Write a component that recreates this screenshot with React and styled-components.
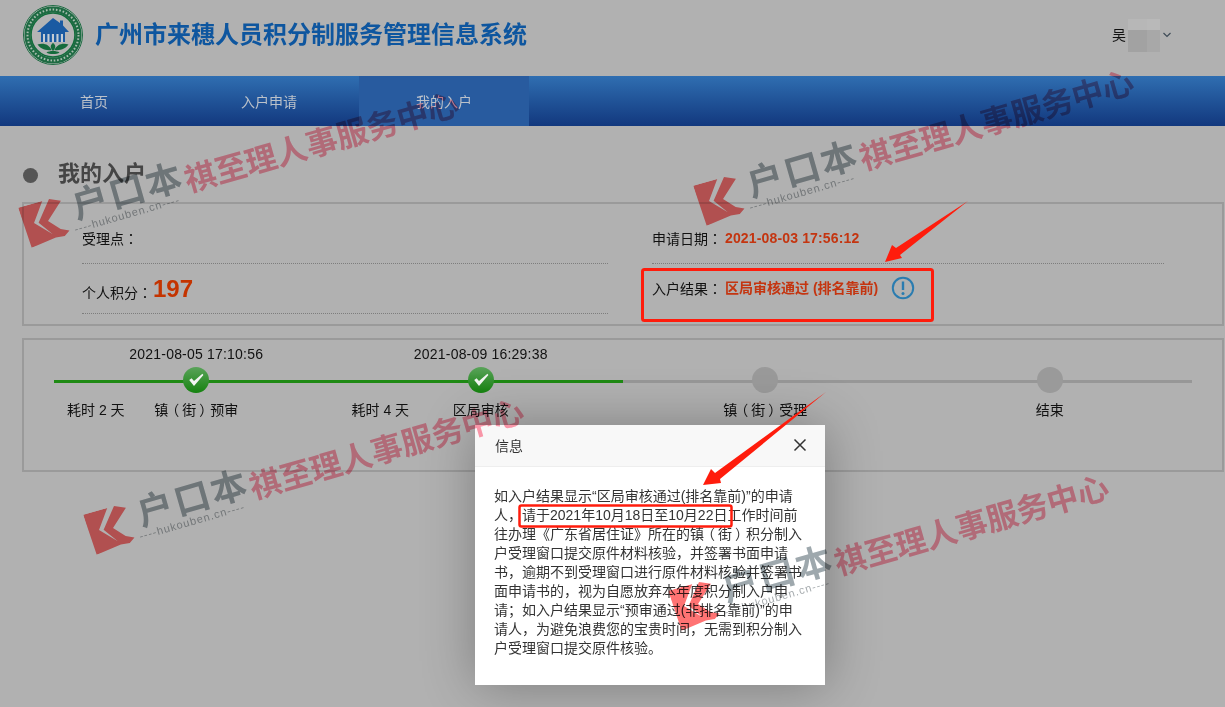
import React from "react";
import styled, { createGlobalStyle } from "styled-components";

const CJK = `"Liberation Sans", "Noto Sans CJK SC", sans-serif`;

const Global = createGlobalStyle`
  html, body { margin: 0; padding: 0; }
  body { font-family: ${CJK}; background: #b1b1b1; }
  * { box-sizing: border-box; }
`;

const Page = styled.div`
  position: relative;
  width: 1225px;
  height: 707px;
  overflow: hidden;
  background: #b1b1b1;
  color: #111;
  font-size: 14px;
`;

const Header = styled.header`
  height: 76px;
  display: flex;
  align-items: center;
  padding: 0 0 6px 23px;
  gap: 12px;
`;

const SiteTitle = styled.h1`
  margin: 0;
  font-size: 24px;
  line-height: 30px;
  font-weight: 700;
  color: #0e569f;
`;

const User = styled.div`
  margin-left: auto;
  margin-right: 54px;
  display: flex;
  align-items: center;
  font-size: 14px;
  line-height: 20px;
`;

const BlurGrid = styled.div`
  width: 32px;
  height: 33px;
  margin: 0 3px 0 2px;
  display: grid;
  grid-template-columns: 19px 13px;
  grid-template-rows: 11px 22px;
`;

const BlurCell = styled.span`
  background: ${(p) => p.$c};
`;

const Nav = styled.nav`
  height: 50px;
  display: flex;
  padding-left: 6.5px;
  background: linear-gradient(#2f6eb1, #12387e);
`;

const NavItem = styled.a`
  width: 175px;
  display: flex;
  align-items: center;
  justify-content: center;
  font-size: 14px;
  color: #bcc2ca;
  ${(p) =>
    p.$active &&
    `
    background: linear-gradient(90deg, transparent 1.5px, #285b9f 1.5px, #285b9f 172.5px, transparent 172.5px);
  `}
`;

const Content = styled.main`
  padding: 0 1px 0 22px;
`;

const SectionTitle = styled.div`
  height: 76px;
  display: flex;
  align-items: center;
  gap: 20px;
  padding: 14px 0 0 1px;
  font-size: 22px;
  font-weight: 700;
  color: #454545;
`;

const Dot = styled.span`
  width: 15px;
  height: 15px;
  margin-top: 8px;
  border-radius: 50%;
  background: #555;
`;

const Panel = styled.section`
  border: 2px solid #9a9a9a;
`;

const InfoPanel = styled(Panel)`
  height: 124px;
  display: grid;
  grid-template-columns: 526px 512px;
  column-gap: 44px;
  grid-template-rows: 60px 50px;
  padding: 0 0 0 58px;
`;

const InfoRow = styled.div`
  display: flex;
  align-items: flex-start;
  padding-top: ${(p) => p.$top}px;
  line-height: 20px;
  ${(p) => p.$rule && "border-bottom: 1px dotted #7d7d7d;"}
`;

const Colon = styled.span`
  font-family: "Noto Sans CJK TC", sans-serif;
`;

const StrongRed = styled.span`
  color: #c43510;
  font-weight: 700;
  font-size: 14px;
  letter-spacing: ${(p) => p.$ls || 0};
  margin-left: 3px;
`;

const Score = styled.span`
  color: #c43400;
  font-size: 24px;
  font-weight: 700;
  line-height: 20px;
  margin-top: -3px;
  margin-left: 1px;
`;

const InfoIcon = styled.svg`
  width: 24px;
  height: 24px;
  margin: -2px 0 0 13px;
`;

const TimelinePanel = styled(Panel)`
  margin-top: 12px;
  height: 134px;
  padding: 0 30px;
  display: grid;
  grid-template-columns: repeat(4, 284.5px);
  align-content: start;
`;

const Step = styled.div`
  position: relative;
  display: grid;
  grid-template-rows: 27px 26px 30px;
  justify-items: center;
  align-items: center;
  &::before {
    content: "";
    position: absolute;
    left: 0;
    right: 0;
    top: 40px;
    height: 2.5px;
    background: ${(p) => (p.$done ? "#1f8a14" : "#979797")};
  }
`;

const StepTime = styled.div`
  font-size: 14px;
  letter-spacing: 0.2px;
`;

const StepDot = styled.div`
  position: relative;
  z-index: 1;
  width: 26px;
  height: 26px;
  border-radius: 50%;
  background: ${(p) =>
    p.$done ? "linear-gradient(#5aa35a, #15820f)" : "#9a9a9a"};
  display: flex;
  align-items: center;
  justify-content: center;
`;

const StepFoot = styled.div`
  width: 100%;
  display: grid;
  grid-template-columns: 1fr 84px 1fr;
  align-items: center;
  font-size: 14px;
  padding-top: 2px;
`;

const Duration = styled.span`
  padding-left: 13px;
`;

const StepName = styled.span`
  text-align: center;
  white-space: nowrap;
`;

const Paren = styled.span`
  display: inline-block;
  transform: translateX(${(p) => (p.$close ? "3px" : "-3px")});
`;

const Modal = styled.div`
  position: absolute;
  left: 475px;
  top: 425px;
  width: 350px;
  height: 260px;
  background: #fff;
  box-shadow: 1px 1px 50px rgba(0, 0, 0, 0.3);
  z-index: 2;
`;

const ModalHead = styled.div`
  height: 42px;
  padding: 0 18px 2px 20px;
  display: flex;
  align-items: center;
  justify-content: space-between;
  background: #f8f8f8;
  border-bottom: 1px solid #eee;
  font-size: 14px;
  color: #333;
`;

const ModalBody = styled.p`
  margin: 0;
  padding: 20px 20px 0 19px;
  font-size: 14px;
  line-height: 19px;
  color: #333;
`;

const Mark = styled.div`
  position: absolute;
  left: ${(p) => p.$x}px;
  top: ${(p) => p.$y}px;
  height: 60px;
  z-index: 3;
  display: flex;
  align-items: center;
  transform: rotate(-16deg);
  transform-origin: 0 50%;
  mix-blend-mode: multiply;
  white-space: nowrap;
  pointer-events: none;
`;

const Brand = styled.div`
  display: flex;
  flex-direction: column;
  align-items: flex-start;
  margin-left: 9px;
  width: 115px;
`;

const BrandName = styled.span`
  font-size: 36px;
  line-height: 30px;
  font-weight: 700;
  letter-spacing: 2px;
  color: #9ea8ad;
`;

const BrandUrl = styled.span`
  font-size: 11px;
  line-height: 12px;
  color: #a7acaf;
  letter-spacing: 0.9px;
  margin-left: -5px;
`;

const Slogan = styled.span`
  font-size: 31.5px;
  line-height: 36px;
  font-weight: 700;
  color: #ff9aad;
`;

const Annotations = styled.svg`
  position: absolute;
  left: 0;
  top: 0;
  z-index: 4;
  pointer-events: none;
`;

const Emblem = () => (
  <svg width="60" height="60" viewBox="0 0 60 60">
    <circle cx="30" cy="30" r="29.5" fill="#b6bdb8" stroke="#1e6b43" strokeWidth="1" />
    <circle cx="30" cy="30" r="25.5" fill="none" stroke="#1e6b43" strokeWidth="6" />
    <circle cx="30" cy="30" r="25.5" fill="none" stroke="#a8bdae" strokeWidth="2" strokeDasharray="1.6 1.8" />
    <circle cx="30" cy="30" r="22" fill="#b4b4b4" stroke="#146c3c" strokeWidth="1.6" />
    <path d="M30 13 L37 18 V15.5 H40 V20.5 L46 27 H42 V37 H18 V27 H14 Z" fill="#1a5aa2" />
    <path d="M20 29 H40 V37 H20 Z" fill="#c4ccd4" />
    <path d="M22 27.5 h2.4 v9.5 h-2.4z M26.5 27.5 h2.4 v9.5 h-2.4z M31 27.5 h2.4 v9.5 h-2.4z M35.5 27.5 h2.4 v9.5 h-2.4z" fill="#1a5aa2" />
    <path d="M30 38 C27 40 27 43 30 46 C33 43 33 40 30 38Z M28.5 45 C22 46 17 43 14.5 39.5 C20 37.5 26 39 28.5 45Z M31.5 45 C38 46 43 43 45.5 39.5 C40 37.5 34 39 31.5 45Z" fill="#156b3c" />
    <path d="M23.5 47.5 C26 45.5 34 45.5 36.5 47.5 C34 49.5 26 49.5 23.5 47.5Z" fill="#156b3c" />
  </svg>
);

const Chevron = () => (
  <svg width="8" height="6" viewBox="0 0 8 6">
    <path d="M0.5 1 L4 4.5 L7.5 1" fill="none" stroke="#3f4c58" strokeWidth="1.2" />
  </svg>
);

const Check = () => (
  <svg width="18" height="16" viewBox="0 0 18 16">
    <path d="M2.2 8 L4.6 6.2 L7 9 L15.4 1.8 L16.4 3 L7 14 Z" fill="#f2f5f2" />
  </svg>
);

const KLogo = () => (
  <svg width="44" height="42" viewBox="0 0 44 42">
    <path
      fill="#ff7373"
      d="M0 0 H25 L11 19 L26 35 L15.5 20 L32 0 L43 5 L25 21 L35 32 L43 36 L37 40 L28 39 L2 42 Z"
    />
  </svg>
);

const Watermark = ({ x, y }) => (
  <Mark $x={x} $y={y}>
    <KLogo />
    <Brand>
      <BrandName>户口本</BrandName>
      <BrandUrl>----hukouben.cn----</BrandUrl>
    </Brand>
    <Slogan>祺至理人事服务中心</Slogan>
  </Mark>
);

const Jie = () => (
  <>
    <Paren>（</Paren>街<Paren $close>）</Paren>
  </>
);

const steps = [
  { key: "a", time: "2021-08-05 17:10:56", name: <>镇<Jie />预审</>, took: "耗时 2 天", done: true },
  { key: "b", time: "2021-08-09 16:29:38", name: "区局审核", took: "耗时 4 天", done: true },
  { key: "c", time: "", name: <>镇<Jie />受理</>, took: "", done: false },
  { key: "d", time: "", name: "结束", took: "", done: false },
];

export default function App() {
  return (
    <>
      <Global />
      <Page>
        <Header>
          <Emblem />
          <SiteTitle>广州市来穗人员积分制服务管理信息系统</SiteTitle>
          <User>
            吴
            <BlurGrid>
              <BlurCell $c="#b7b7b7" />
              <BlurCell $c="#b9b9b9" />
              <BlurCell $c="#a2a2a2" />
              <BlurCell $c="#a8a8a8" />
            </BlurGrid>
            <Chevron />
          </User>
        </Header>
        <Nav>
          <NavItem>首页</NavItem>
          <NavItem>入户申请</NavItem>
          <NavItem $active>我的入户</NavItem>
        </Nav>
        <Content>
          <SectionTitle>
            <Dot />
            我的入户
          </SectionTitle>
          <InfoPanel>
            <InfoRow $top={24} $rule>
              <span>受理点<Colon>：</Colon></span>
            </InfoRow>
            <InfoRow $top={24} $rule>
              <span>申请日期<Colon>：</Colon></span>
              <StrongRed $ls="0.15px">2021-08-03 17:56:12</StrongRed>
            </InfoRow>
            <InfoRow $top={18} $rule>
              <span>个人积分<Colon>：</Colon></span>
              <Score>197</Score>
            </InfoRow>
            <InfoRow $top={14}>
              <span>入户结果<Colon>：</Colon></span>
              <StrongRed>区局审核通过 (排名靠前)</StrongRed>
              <InfoIcon viewBox="0 0 24 24">
                <circle cx="12" cy="12" r="10.2" fill="none" stroke="#2a7cb0" strokeWidth="2" />
                <path d="M12 5.5 V14" stroke="#2a7cb0" strokeWidth="2.4" />
                <circle cx="12" cy="17.4" r="1.5" fill="#2a7cb0" />
              </InfoIcon>
            </InfoRow>
          </InfoPanel>
          <TimelinePanel>
            {steps.map((s) => (
              <Step key={s.key} $done={s.done}>
                <StepTime>{s.time}</StepTime>
                <StepDot $done={s.done}>{s.done && <Check />}</StepDot>
                <StepFoot>
                  <Duration>{s.took}</Duration>
                  <StepName>{s.name}</StepName>
                </StepFoot>
              </Step>
            ))}
          </TimelinePanel>
        </Content>
        <Modal>
          <ModalHead>
            信息
            <svg width="14" height="14" viewBox="0 0 14 14">
              <path d="M1.5 1.5 L12.5 12.5 M12.5 1.5 L1.5 12.5" stroke="#333" strokeWidth="1.5" />
            </svg>
          </ModalHead>
          <ModalBody>
            如入户结果显示“区局审核通过(排名靠前)”的申请人，请于2021年10月18日至10月22日工作时间前往办理《广东省居住证》所在的镇<Jie />积分制入户受理窗口提交原件材料核验，并签署书面申请书，逾期不到受理窗口进行原件材料核验并签署书面申请书的，视为自愿放弃本年度积分制入户申请；如入户结果显示“预审通过(非排名靠前)”的申请人，为避免浪费您的宝贵时间，无需到积分制入户受理窗口提交原件核验。
          </ModalBody>
        </Modal>
        <Watermark x={24} y={198} />
        <Watermark x={699} y={176} />
        <Watermark x={89} y={505} />
        <Watermark x={674} y={581} />
        <Annotations width="1225" height="707" viewBox="0 0 1225 707">
          <rect x="642.5" y="269.5" width="290" height="51" rx="2" fill="none" stroke="#ff1c0c" strokeWidth="3" />
          <rect x="519.5" y="505.5" width="212" height="21" rx="2" fill="none" stroke="#ff1c0c" strokeWidth="2.5" />
          <path d="M885 262 L892 245 L896 248 L968 201 L900 255 L902 258 Z" fill="#ff1c0c" />
          <path d="M703 485 L711 469 L715 473 L826 392 L720 479 L721 483 Z" fill="#ff1c0c" />
        </Annotations>
      </Page>
    </>
  );
}
